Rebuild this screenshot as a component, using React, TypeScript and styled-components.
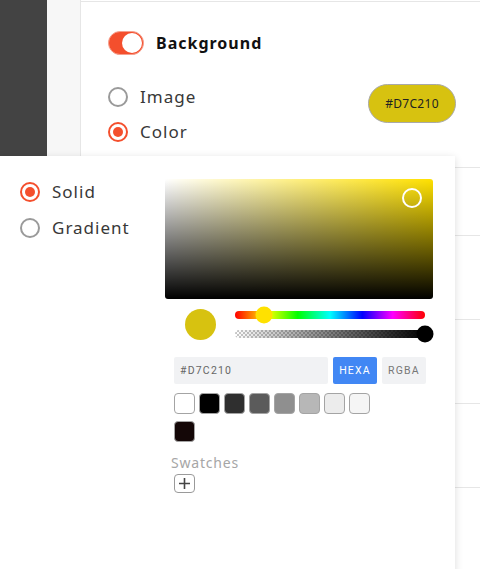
import styled, { createGlobalStyle } from "styled-components";

const GlobalStyle = createGlobalStyle`
  html, body {
    margin: 0;
    padding: 0;
    background: #fff;
    overflow: hidden;
  }
  * { box-sizing: border-box; }
`;

const ACCENT = "#f44f2d";
const UI_FONT = `"Noto Sans", "Open Sans", sans-serif`;
const PICKER_FONT = `Roboto, "Liberation Sans", sans-serif`;

const Page = styled.div`
  position: relative;
  display: flex;
  width: 480px;
  height: 569px;
  overflow: hidden;
  font-family: ${UI_FONT};
`;

const DarkRail = styled.div`
  width: 47px;
  background: #434343;
`;

const GrayRail = styled.div`
  width: 34px;
  background: #f7f7f7;
  border-right: 1px solid #e6e6e6;
`;

const Main = styled.div`
  flex: 1;
  display: flex;
  flex-direction: column;
  border-top: 1px solid #e6e6e6;
  margin-top: 1px;
`;

const Section = styled.div`
  height: 166px;
  padding: 29px 24px 0 27px;
  border-bottom: 1px solid #e6e6e6;
`;

const Row = styled.div<{ $h: number }>`
  height: ${(p) => p.$h}px;
  border-bottom: 1px solid #e6e6e6;
`;

const Header = styled.div`
  display: flex;
  align-items: center;
  gap: 12px;
`;

const Toggle = styled.div`
  width: 36px;
  height: 24px;
  border-radius: 12px;
  background: ${ACCENT};
  border: 1px solid #f6a08e;
  display: flex;
  justify-content: flex-end;
  align-items: center;
  padding: 1px;
`;

const Knob = styled.div`
  width: 20px;
  height: 20px;
  border-radius: 50%;
  background: #fff;
`;

const Title = styled.span`
  font-weight: 700;
  font-size: 16px;
  color: #111;
  letter-spacing: 1px;
`;

const OptionsRow = styled.div`
  display: flex;
  justify-content: space-between;
  align-items: flex-start;
  margin-top: 31px;
`;

const RadioList = styled.div`
  display: flex;
  flex-direction: column;
  gap: 14px;
`;

const RadioRow = styled.label`
  display: flex;
  align-items: center;
  gap: 12px;
  font-size: 17px;
  color: #383838;
  letter-spacing: 1px;
  line-height: 21px;
`;

const RadioDot = styled.span<{ $on?: boolean }>`
  width: 20px;
  height: 20px;
  border-radius: 50%;
  border: 2px solid ${(p) => (p.$on ? ACCENT : "#9a9a9a")};
  display: flex;
  align-items: center;
  justify-content: center;
  &::after {
    content: "";
    width: 10px;
    height: 10px;
    border-radius: 50%;
    background: ${(p) => (p.$on ? ACCENT : "transparent")};
  }
`;

const ColorPill = styled.div`
  width: 88px;
  height: 39px;
  margin-top: -2px;
  border-radius: 20px;
  background: #d7c210;
  border: 1px solid #a9a9a9;
  display: flex;
  align-items: center;
  justify-content: center;
  font-size: 12px;
  letter-spacing: 0.3px;
  color: #222;
`;

const Popover = styled.div`
  position: absolute;
  left: 0;
  top: 156px;
  width: 455px;
  height: 430px;
  background: #fff;
  box-shadow: 0 2px 8px rgba(0, 0, 0, 0.14);
  display: flex;
  padding: 23px 0 0 20px;
`;

const TypeList = styled.div`
  width: 145px;
  display: flex;
  flex-direction: column;
  gap: 15px;
  padding-top: 2px;
`;

const Picker = styled.div`
  width: 268px;
  display: flex;
  flex-direction: column;
  font-family: ${PICKER_FONT};
`;

const Saturation = styled.div<{ $hue: string }>`
  position: relative;
  height: 120px;
  border-radius: 3px;
  background:
    linear-gradient(to bottom, rgba(0, 0, 0, 0), #000),
    linear-gradient(to right, #fff, rgba(255, 255, 255, 0)),
    ${(p) => p.$hue};
`;

const SatPointer = styled.div`
  position: absolute;
  width: 20px;
  height: 20px;
  border-radius: 50%;
  border: 2px solid #fff;
  transform: translate(-50%, -50%);
`;

const Controls = styled.div`
  display: flex;
  align-items: center;
  margin-top: 10px;
  padding-left: 20px;
  gap: 19px;
`;

const Preview = styled.div`
  width: 31px;
  height: 31px;
  border-radius: 50%;
  background: #d7c210;
  flex-shrink: 0;
`;

const Sliders = styled.div`
  flex: 1;
  display: flex;
  flex-direction: column;
  gap: 11px;
  padding-right: 8px;
`;

const Track = styled.div<{ $kind: "hue" | "alpha" }>`
  position: relative;
  height: 8px;
  border-radius: 4px;
  background: ${(p) =>
    p.$kind === "hue"
      ? "linear-gradient(to right, #f00 0%, #ff0 17%, #0f0 33%, #0ff 50%, #00f 67%, #f0f 83%, #f00 100%)"
      : `linear-gradient(to right, rgba(0,0,0,0), #000),
         repeating-conic-gradient(#c8c8c8 0% 25%, #fff 0% 50%) 0 0 / 4px 4px`};
`;

const Thumb = styled.div<{ $color: string }>`
  position: absolute;
  top: 50%;
  width: 17px;
  height: 17px;
  border-radius: 50%;
  background: ${(p) => p.$color};
  transform: translate(-50%, -50%);
`;

const InputRow = styled.div`
  display: flex;
  gap: 5px;
  margin-top: 17px;
  padding-left: 9px;
`;

const HexInput = styled.div`
  width: 154px;
  height: 27px;
  background: #f1f2f4;
  border-radius: 2px;
  display: flex;
  align-items: center;
  padding-left: 6px;
  font-size: 10.5px;
  color: #666;
  letter-spacing: 1.2px;
`;

const ModeButton = styled.div<{ $active?: boolean }>`
  width: 44px;
  height: 27px;
  border-radius: 2px;
  background: ${(p) => (p.$active ? "#4187f4" : "#f1f2f4")};
  color: ${(p) => (p.$active ? "#fff" : "#777")};
  font-size: 10.5px;
  letter-spacing: 1.2px;
  display: flex;
  align-items: center;
  justify-content: center;
`;

const SwatchGrid = styled.div`
  display: grid;
  grid-template-columns: repeat(8, 21px);
  gap: 7px 4px;
  margin-top: 9px;
  padding-left: 9px;
`;

const Swatch = styled.div<{ $c: string }>`
  width: 21px;
  height: 21px;
  border-radius: 4px;
  background: ${(p) => p.$c};
  border: 1px solid #a4a4a4;
`;

const SwatchLabel = styled.div`
  margin-top: 11px;
  padding-left: 6px;
  font-family: ${UI_FONT};
  font-size: 14px;
  color: #a6a6a6;
  letter-spacing: 0.8px;
`;

const AddButton = styled.div`
  margin: 2px 0 0 9px;
  width: 21px;
  height: 19px;
  border: 1px solid #9a9a9a;
  border-radius: 4px;
  display: flex;
  align-items: center;
  justify-content: center;
`;

const swatches = [
  "#ffffff",
  "#000000",
  "#2f2f2f",
  "#5b5b5b",
  "#8f8f8f",
  "#b7b7b7",
  "#ececec",
  "#f5f5f5",
  "#140707",
];

export default function App() {
  return (
    <>
      <GlobalStyle />
      <Page>
        <DarkRail />
        <GrayRail />
        <Main>
          <Section>
            <Header>
              <Toggle>
                <Knob />
              </Toggle>
              <Title>Background</Title>
            </Header>
            <OptionsRow>
              <RadioList>
                <RadioRow>
                  <RadioDot />
                  Image
                </RadioRow>
                <RadioRow>
                  <RadioDot $on />
                  Color
                </RadioRow>
              </RadioList>
              <ColorPill>#D7C210</ColorPill>
            </OptionsRow>
          </Section>
          <Row $h={68} />
          <Row $h={84} />
          <Row $h={84} />
          <Row $h={84} />
        </Main>

        <Popover>
          <TypeList>
            <RadioRow>
              <RadioDot $on />
              Solid
            </RadioRow>
            <RadioRow>
              <RadioDot />
              Gradient
            </RadioRow>
          </TypeList>
          <Picker>
            <Saturation $hue="#ffe100">
              <SatPointer style={{ left: "92%", top: "16%" }} />
            </Saturation>
            <Controls>
              <Preview />
              <Sliders>
                <Track $kind="hue">
                  <Thumb $color="#ffe100" style={{ left: "15.3%" }} />
                </Track>
                <Track $kind="alpha">
                  <Thumb $color="#000" style={{ left: "100%" }} />
                </Track>
              </Sliders>
            </Controls>
            <InputRow>
              <HexInput>#D7C210</HexInput>
              <ModeButton $active>HEXA</ModeButton>
              <ModeButton>RGBA</ModeButton>
            </InputRow>
            <SwatchGrid>
              {swatches.map((c) => (
                <Swatch key={c} $c={c} />
              ))}
            </SwatchGrid>
            <SwatchLabel>Swatches</SwatchLabel>
            <AddButton>
              <svg width="13" height="13" viewBox="0 0 13 13">
                <path d="M6.5 1v11M1 6.5h11" stroke="#444" strokeWidth="1.6" />
              </svg>
            </AddButton>
          </Picker>
        </Popover>
      </Page>
    </>
  );
}
